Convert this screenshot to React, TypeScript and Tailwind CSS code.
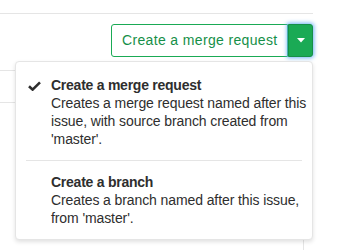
import React from 'react';

const CheckIcon: React.FC = () => (
  <svg width="13" height="10" viewBox="0 0 13 10" className="shrink-0">
    <path d="M1 5.2 L4.6 8.6 L12 1.4" fill="none" stroke="#2e2e2e" strokeWidth="2.6" strokeLinejoin="miter" />
  </svg>
);

const App: React.FC = () => {
  return (
    <div
      className="relative w-[345px] h-[250px] bg-white overflow-hidden"
      style={{ fontFamily: '"Liberation Sans", Arial, sans-serif' }}
    >
      <div className="w-[313px]">
        <div className="h-[14px] border-b border-[#e5e5e5]"></div>

        <div className="flex justify-end mt-[10px]">
          <div className="flex h-[33px]">
            <button className="h-full w-[177px] pl-[10px] text-left border border-[#1aaa55] rounded-l-[3px] text-[14px] tracking-[0.35px] text-[#168f48] bg-white">
              Create a merge request
            </button>
            <button className="h-full w-[25px] flex items-center justify-center bg-[#1aaa55] border border-[#168f48] rounded-r-[3px] shadow-[0_0_4px_1px_#6cb3f5]">
              <svg width="8" height="5" viewBox="0 0 8 5">
                <path d="M0 0 H8 L4 4.5 Z" fill="#ffffff" />
              </svg>
            </button>
          </div>
        </div>

        {/* content behind the menu */}
        <div className="mt-[13px] w-[304px] border-r border-[#e5e5e5] h-[200px]">
          <div className="h-[33px] border-t border-b border-[#e5e5e5]"></div>
        </div>
      </div>

      <div className="absolute left-[15px] top-[61px] w-[298px] h-[179px] bg-white border border-[#e5e5e5] rounded-[4px] shadow-[0_2px_4px_rgba(0,0,0,0.12)] pt-[8px] pb-[7px] text-[14px] leading-[18px] text-[#2e2e2e]">
        <div className="flex pt-[6px] pb-[6px] pl-[12px]">
          <div className="w-[23px] shrink-0 pt-[5px]">
            <CheckIcon />
          </div>
          <div className="tracking-[-0.1px]">
            <div className="font-bold tracking-[-0.25px]">Create a merge request</div>
            <div>Creates a merge request named after this issue, with source branch created from 'master'.</div>
          </div>
        </div>
        <div className="mx-[10px] my-[6px] border-t border-[#e5e5e5]"></div>
        <div className="flex pt-[6px] pb-[6px] pl-[12px]">
          <div className="w-[23px] shrink-0"></div>
          <div className="tracking-[-0.1px]">
            <div className="font-bold tracking-[-0.25px]">Create a branch</div>
            <div>Creates a branch named after this issue, from 'master'.</div>
          </div>
        </div>
      </div>
    </div>
  );
};

export default App;
